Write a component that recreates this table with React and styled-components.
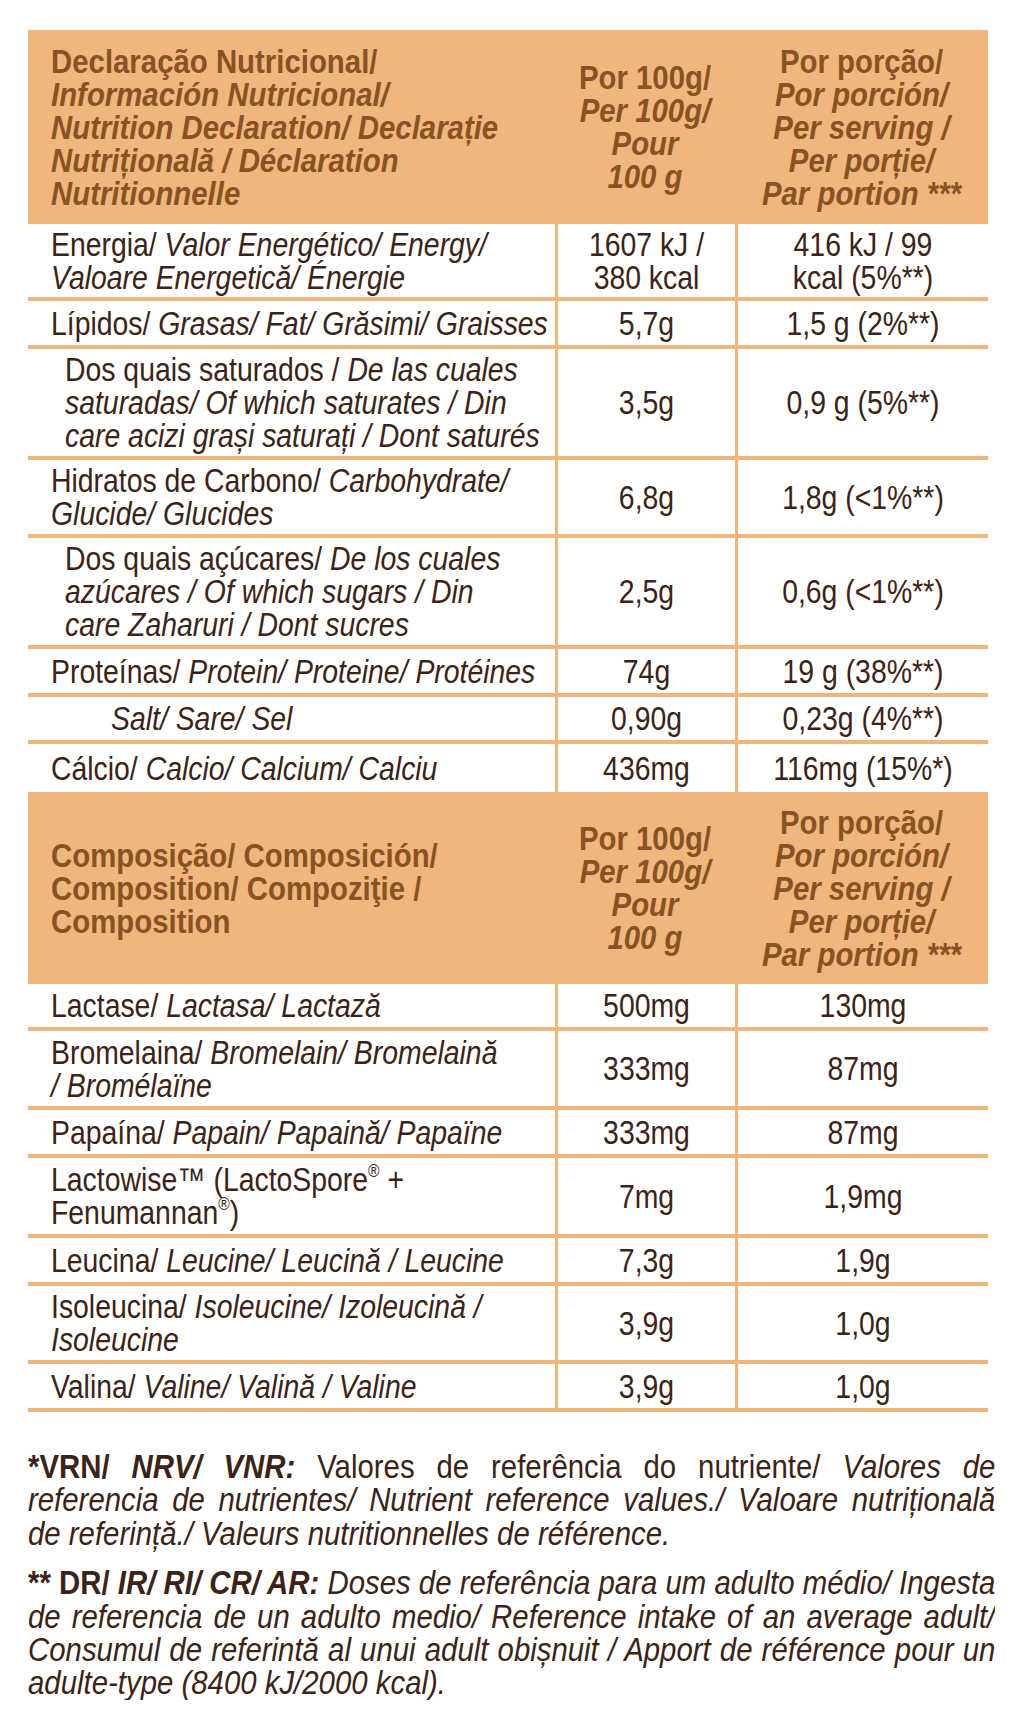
import React from "react";
import styled, { createGlobalStyle } from "styled-components";

const C = {
  headBg: "#EFB77E",
  line: "#F0B57B",
  head: "#8A5123",
  body: "#3B2317",
};

const BODY_S = 0.86;
const HEAD_S = 0.89;
const FOOT_S = 0.89;

const Global = createGlobalStyle`
  html, body { margin: 0; padding: 0; background: #ffffff; }
  body {
    font-family: "Liberation Sans", Arial, sans-serif;
    color: ${C.body};
  }
`;

const Page = styled.div`
  width: 1024px;
  padding: 30px 0 40px 28px;
  box-sizing: border-box;
  overflow: hidden;
`;

const Table = styled.div`
  width: 960px;
  display: flex;
  flex-direction: column;
`;

const HeadRow = styled.div`
  display: grid;
  grid-template-columns: 527px 180px 253px;
  background: ${C.headBg};
  color: ${C.head};
  font-weight: 700;
  font-size: 33px;
  line-height: 33px;
  height: ${(p) => p.$h}px;
  box-sizing: border-box;
`;

const HeadCell = styled.div`
  display: flex;
  flex-direction: column;
  justify-content: center;
  padding-left: ${(p) => (p.$center ? 0 : 23)}px;
  min-width: 0;
`;

const Row = styled.div`
  display: grid;
  grid-template-columns: 527px 180px 253px;
  border-bottom: ${(p) => (p.$noBorder ? "none" : `4px solid ${C.line}`)};
  font-size: 33px;
  line-height: 33px;
  height: ${(p) => p.$h}px;
  box-sizing: border-box;
`;

const LabelCell = styled.div`
  display: flex;
  flex-direction: column;
  justify-content: center;
  padding-left: ${(p) => p.$indent}px;
  min-width: 0;
`;

const ValueCell = styled.div`
  display: flex;
  flex-direction: column;
  justify-content: center;
  border-left: 3px solid ${C.line};
  min-width: 0;
`;

const TextLine = styled.div`
  white-space: nowrap;
  text-align: ${(p) => (p.$center ? "center" : "left")};
  transform: scaleX(${(p) => p.$s});
  transform-origin: ${(p) => (p.$center ? "center" : "left")} center;
`;

const It = styled.i`
  font-style: italic;
`;

const Sup = styled.sup`
  font-size: 0.55em;
  line-height: 0;
  vertical-align: 0.75em;
`;

const Notes = styled.div`
  width: 967px;
  margin-top: 38px;
  display: flex;
  flex-direction: column;
  gap: 16px;
  font-size: 33px;
  line-height: 33.4px;
  color: ${C.body};
  overflow: hidden;
`;

const Para = styled.div`
  display: flex;
  flex-direction: column;
`;

const FootLine = styled.div`
  width: ${Math.round(967 / FOOT_S)}px;
  transform: scaleX(${FOOT_S});
  transform-origin: left center;
  text-align: ${(p) => (p.$justify ? "justify" : "left")};
  text-align-last: ${(p) => (p.$justify ? "justify" : "left")};
`;

const B = styled.b`
  font-weight: 700;
  font-style: ${(p) => (p.$it ? "italic" : "normal")};
`;

const Lines = ({ lines, center, s }) =>
  lines.map((l, i) => (
    <TextLine key={i} $center={center} $s={s}>
      {l}
    </TextLine>
  ));

const rows = [
  {
    h: 77,
    indent: 23,
    label: [
      <>Energia/ <It>Valor Energético/ Energy/</It></>,
      <It>Valoare Energetică/ Énergie</It>,
    ],
    a: ["1607 kJ /", "380 kcal"],
    b: ["416 kJ / 99", "kcal (5%**)"],
  },
  {
    h: 48,
    indent: 23,
    label: [<>Lípidos/ <It>Grasas/ Fat/ Grăsimi/ Graisses</It></>],
    a: ["5,7g"],
    b: ["1,5 g (2%**)"],
  },
  {
    h: 111,
    indent: 37,
    label: [
      <>Dos quais saturados / <It>De las cuales</It></>,
      <It>saturadas/ Of which saturates / Din</It>,
      <It>care acizi grași saturați / Dont saturés</It>,
    ],
    a: ["3,5g"],
    b: ["0,9 g (5%**)"],
  },
  {
    h: 78,
    indent: 23,
    label: [
      <>Hidratos de Carbono/ <It>Carbohydrate/</It></>,
      <It>Glucide/ Glucides</It>,
    ],
    a: ["6,8g"],
    b: ["1,8g (<1%**)"],
  },
  {
    h: 111,
    indent: 37,
    label: [
      <>Dos quais açúcares/ <It>De los cuales</It></>,
      <It>azúcares / Of which sugars / Din</It>,
      <It>care Zaharuri / Dont sucres</It>,
    ],
    a: ["2,5g"],
    b: ["0,6g (<1%**)"],
  },
  {
    h: 48,
    indent: 23,
    label: [<>Proteínas/ <It>Protein/ Proteine/ Protéines</It></>],
    a: ["74g"],
    b: ["19 g (38%**)"],
  },
  {
    h: 47,
    indent: 83,
    label: [<It>Salt/ Sare/ Sel</It>],
    a: ["0,90g"],
    b: ["0,23g (4%**)"],
  },
  {
    h: 48,
    indent: 23,
    label: [<>Cálcio/ <It>Calcio/ Calcium/ Calciu</It></>],
    a: ["436mg"],
    b: ["116mg (15%*)"],
    last: true,
  },
];

const rows2 = [
  {
    h: 47,
    label: [<>Lactase/ <It>Lactasa/ Lactază</It></>],
    a: ["500mg"],
    b: ["130mg"],
  },
  {
    h: 79,
    label: [
      <>Bromelaina/ <It>Bromelain/ Bromelaină</It></>,
      <It>/ Bromélaïne</It>,
    ],
    a: ["333mg"],
    b: ["87mg"],
  },
  {
    h: 48,
    label: [<>Papaína/ <It>Papain/ Papaină/ Papaïne</It></>],
    a: ["333mg"],
    b: ["87mg"],
  },
  {
    h: 80,
    label: [
      <>Lactowise™ (LactoSpore<Sup>®</Sup> +</>,
      <>Fenumannan<Sup>®</Sup>)</>,
    ],
    a: ["7mg"],
    b: ["1,9mg"],
  },
  {
    h: 48,
    label: [<>Leucina/ <It>Leucine/ Leucină / Leucine</It></>],
    a: ["7,3g"],
    b: ["1,9g"],
  },
  {
    h: 78,
    label: [
      <>Isoleucina/ <It>Isoleucine/ Izoleucină /</It></>,
      <It>Isoleucine</It>,
    ],
    a: ["3,9g"],
    b: ["1,0g"],
  },
  {
    h: 48,
    label: [<>Valina/ <It>Valine/ Valină / Valine</It></>],
    a: ["3,9g"],
    b: ["1,0g"],
  },
];

const DataRow = ({ r }) => (
  <Row $h={r.h} $noBorder={r.last}>
    <LabelCell $indent={r.indent ?? 23}>
      <Lines lines={r.label} s={BODY_S} />
    </LabelCell>
    <ValueCell>
      <Lines lines={r.a} s={BODY_S} center />
    </ValueCell>
    <ValueCell>
      <Lines lines={r.b} s={BODY_S} center />
    </ValueCell>
  </Row>
);

const PerServing = () => (
  <HeadCell $center>
    <Lines
      center
      s={HEAD_S}
      lines={[
        "Por porção/",
        <It>Por porción/</It>,
        <It>Per serving /</It>,
        <It>Per porție/</It>,
        <It>Par portion ***</It>,
      ]}
    />
  </HeadCell>
);

const Per100 = () => (
  <HeadCell $center>
    <Lines
      center
      s={HEAD_S}
      lines={["Por 100g/", <It>Per 100g/</It>, <It>Pour</It>, <It>100 g</It>]}
    />
  </HeadCell>
);

export default function App() {
  return (
    <Page>
      <Global />
      <Table>
        <HeadRow $h={194}>
          <HeadCell>
            <Lines
              s={HEAD_S}
              lines={[
                "Declaração Nutricional/",
                <It>Información Nutricional/</It>,
                <It>Nutrition Declaration/ Declarație</It>,
                <It>Nutrițională / Déclaration</It>,
                <It>Nutritionnelle</It>,
              ]}
            />
          </HeadCell>
          <Per100 />
          <PerServing />
        </HeadRow>
        {rows.map((r, i) => (
          <DataRow key={i} r={r} />
        ))}
        <HeadRow $h={192}>
          <HeadCell>
            <Lines
              s={HEAD_S}
              lines={[
                "Composição/ Composición/",
                "Composition/ Compoziţie /",
                "Composition",
              ]}
            />
          </HeadCell>
          <Per100 />
          <PerServing />
        </HeadRow>
        {rows2.map((r, i) => (
          <DataRow key={i} r={r} />
        ))}
      </Table>
      <Notes>
        <Para>
          <FootLine $justify>
            <B>*VRN/ </B>
            <B $it>NRV/ VNR:</B> Valores de referência do nutriente/{" "}
            <It>Valores de</It>
          </FootLine>
          <FootLine $justify>
            <It>referencia de nutrientes/ Nutrient reference values./ Valoare nutrițională</It>
          </FootLine>
          <FootLine>
            <It>de referință./ Valeurs nutritionnelles de référence.</It>
          </FootLine>
        </Para>
        <Para>
          <FootLine $justify>
            <B>** DR/ </B>
            <B $it>IR/ RI/ CR/ AR:</B>{" "}
            <It>Doses de referência para um adulto médio/ Ingesta</It>
          </FootLine>
          <FootLine $justify>
            <It>de referencia de un adulto medio/ Reference intake of an average adult/</It>
          </FootLine>
          <FootLine $justify>
            <It>Consumul de referintă al unui adult obișnuit / Apport de référence pour un</It>
          </FootLine>
          <FootLine>
            <It>adulte-type (8400 kJ/2000 kcal).</It>
          </FootLine>
        </Para>
      </Notes>
    </Page>
  );
}
